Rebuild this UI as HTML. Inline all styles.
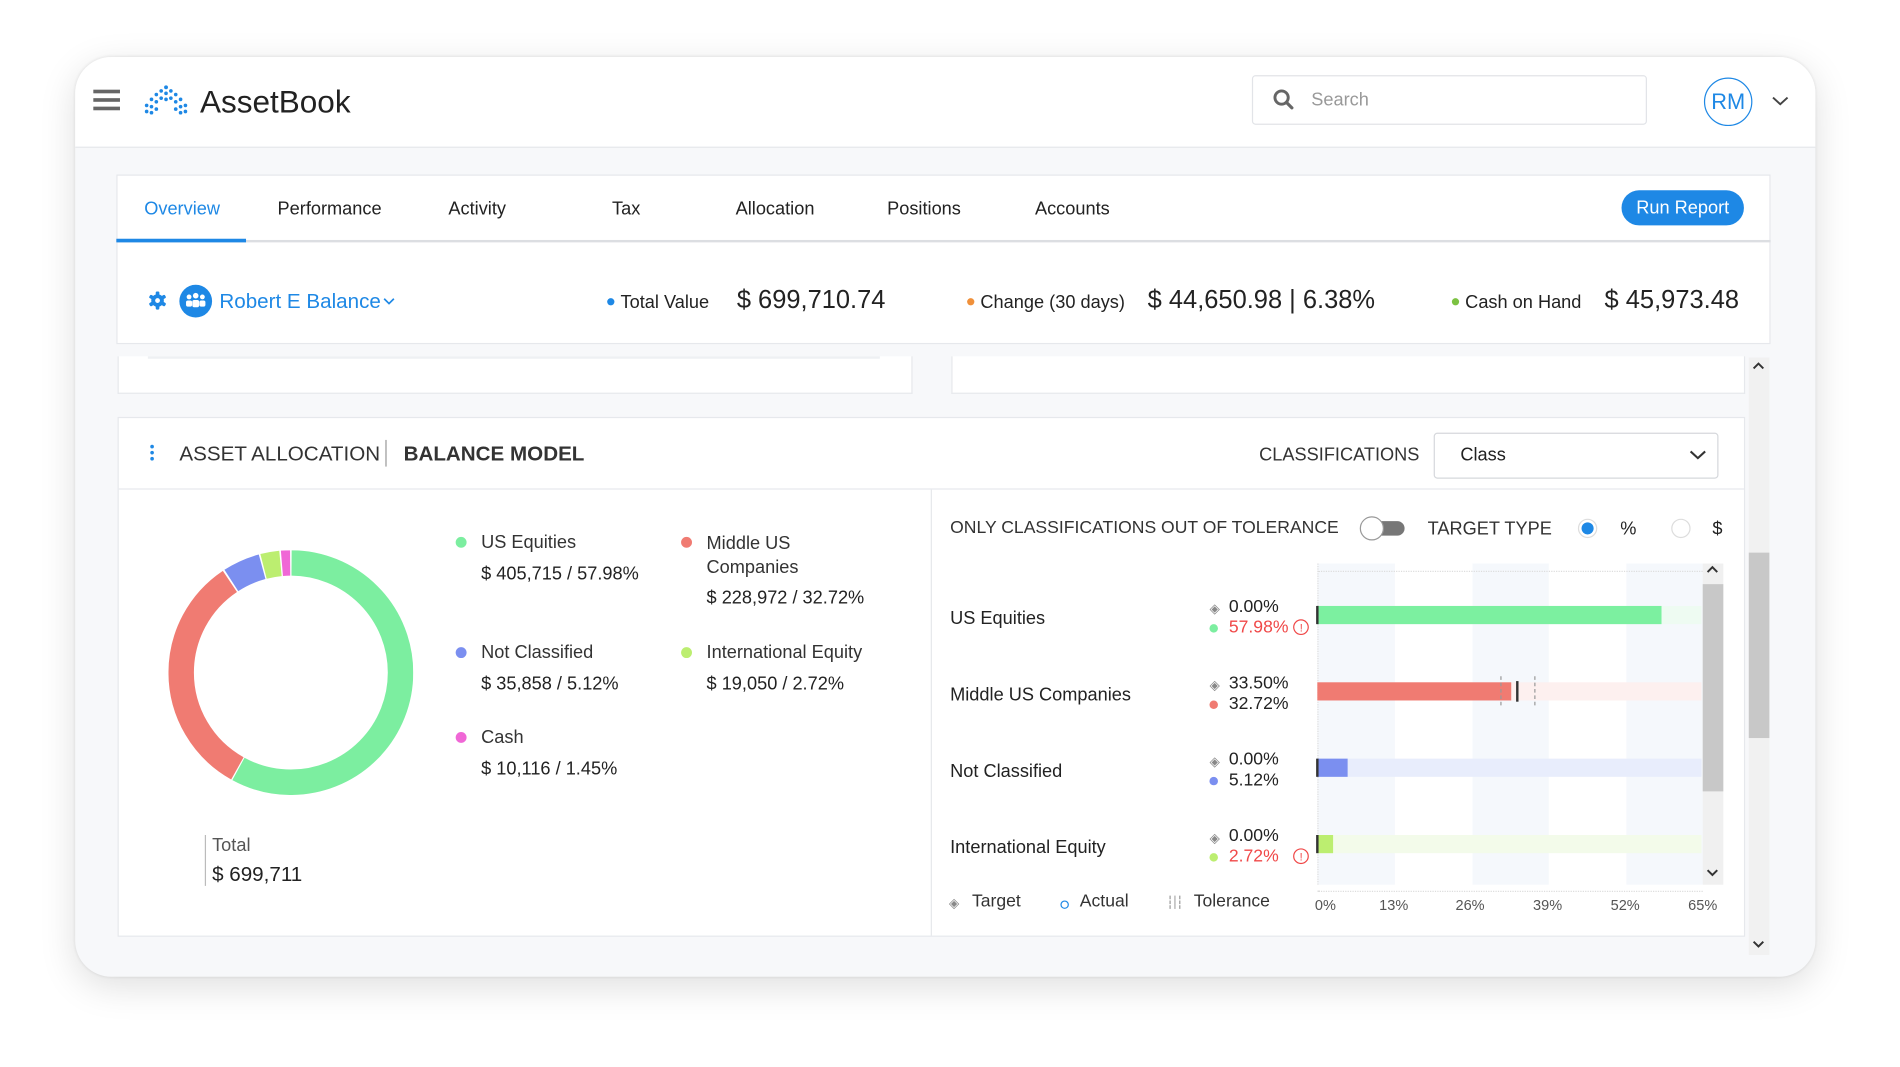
<!DOCTYPE html>
<html><head><meta charset="utf-8"><style>
*{box-sizing:border-box;margin:0;padding:0}
html,body{width:1900px;height:1067px;overflow:hidden;background:#fff}
#s{position:absolute;left:0;top:0;width:1560px;height:876px;transform:scale(1.2119);transform-origin:0 0;font-family:"Liberation Sans",sans-serif;color:#222}
.a{position:absolute;white-space:nowrap}
.card{position:absolute;left:62px;top:47px;width:1436px;height:759px;border-radius:30px;background:#f7f8fa;box-shadow:0 8px 30px rgba(0,0,0,.13),0 0 3px rgba(0,0,0,.1);overflow:hidden}
.hdr{position:absolute;left:0;top:0;width:1436px;height:75px;background:#fff;border-bottom:1px solid #e4e6ea}
.panel{position:absolute;background:#fff;border:1px solid #e6e8ec}
.dot{display:inline-block;width:7px;height:7px;border-radius:50%;margin-right:5px;vertical-align:middle;position:relative;top:-1px}
.t15{font-size:15px}
.ldot{position:absolute;width:9px;height:9px;border-radius:50%}
</style></head><body><div id="s">
<div class="card">
 <div class="hdr"></div>
</div>
<div class="a" style="left:77px;top:74px;width:22px;height:3px;background:#666;box-shadow:0 7px 0 #666,0 14px 0 #666"></div>
<svg class="a" style="left:118px;top:70px" width="38" height="26" viewBox="0 0 38 26">
<g fill="#1e88e5">
<circle cx="19" cy="2" r="1.6"/><circle cx="15" cy="5" r="1.5"/><circle cx="23" cy="5" r="1.5"/><circle cx="19" cy="7" r="1.5"/>
<circle cx="11" cy="8" r="1.5"/><circle cx="27" cy="8" r="1.5"/><circle cx="15" cy="11" r="1.5"/><circle cx="23" cy="11" r="1.5"/><circle cx="19" cy="12" r="1.5"/>
<circle cx="7" cy="12" r="1.5"/><circle cx="31" cy="12" r="1.5"/><circle cx="11" cy="14" r="1.5"/><circle cx="27" cy="14" r="1.5"/>
<circle cx="3" cy="17" r="1.5"/><circle cx="35" cy="17" r="1.5"/><circle cx="7" cy="18" r="1.5"/><circle cx="31" cy="18" r="1.5"/><circle cx="11" cy="20" r="1.5"/><circle cx="27" cy="20" r="1.5"/>
<circle cx="3" cy="22" r="1.5"/><circle cx="35" cy="22" r="1.5"/><circle cx="7" cy="23" r="1.5"/><circle cx="31" cy="23" r="1.5"/>
</g></svg>
<div class="a" style="left:165px;top:69px;font-size:26px;color:#222">AssetBook</div>
<div class="a" style="left:1033px;top:62px;width:326px;height:41px;border:1px solid #e2e4e8;border-radius:3px;background:#fff"></div>
<svg class="a" style="left:1050px;top:73px" width="18" height="18" viewBox="0 0 18 18"><circle cx="7.5" cy="7.5" r="5.5" fill="none" stroke="#666" stroke-width="2.4"/><path d="M11.5 11.5L16 16" stroke="#666" stroke-width="2.6" stroke-linecap="round"/></svg>
<div class="a" style="left:1082px;top:74px;font-size:15px;color:#999">Search</div>
<div class="a" style="left:1406px;top:64px;width:40px;height:40px;border:1.5px solid #1e88e5;border-radius:50%;color:#1e88e5;font-size:18px;text-align:center;line-height:38px">RM</div>
<svg class="a" style="left:1462px;top:79px" width="14" height="9"><path d="M1 1.5L7 7L13 1.5" fill="none" stroke="#444" stroke-width="1.6"/></svg>

<div class="panel" style="left:96px;top:144px;width:1365px;height:140px"></div>
<div class="a" style="left:96px;top:198px;width:1365px;height:2px;background:#dcdee2"></div>
<div class="a" style="left:96px;top:197px;width:107px;height:3px;background:#1e88e5"></div>
<div class="a t15" style="left:119px;top:164px;color:#1e88e5">Overview</div>
<div class="a t15" style="left:229px;top:164px">Performance</div>
<div class="a t15" style="left:370px;top:164px">Activity</div>
<div class="a t15" style="left:505px;top:164px">Tax</div>
<div class="a t15" style="left:607px;top:164px">Allocation</div>
<div class="a t15" style="left:732px;top:164px">Positions</div>
<div class="a t15" style="left:854px;top:164px">Accounts</div>
<div class="a" style="left:1338px;top:157px;width:101px;height:29px;border-radius:15px;background:#1e88e5;color:#fff;font-size:15px;text-align:center;line-height:29px">Run Report</div>

<svg class="a" style="left:122px;top:240px" width="16" height="16" viewBox="0 0 16 16"><g fill="#1e88e5"><circle cx="8" cy="8" r="5.2"/><rect x="6.5" y="0.5" width="3" height="15" rx="1"/><rect x="6.5" y="0.5" width="3" height="15" rx="1" transform="rotate(60 8 8)"/><rect x="6.5" y="0.5" width="3" height="15" rx="1" transform="rotate(120 8 8)"/></g><circle cx="8" cy="8" r="2" fill="#fff"/></svg>
<div class="a" style="left:148px;top:235px;width:27px;height:27px;border-radius:50%;background:#1e88e5"></div>
<svg class="a" style="left:151px;top:241px" width="21" height="14" viewBox="0 0 21 14"><g fill="#fff"><circle cx="5" cy="4" r="2"/><circle cx="10.5" cy="3" r="2.3"/><circle cx="16" cy="4" r="2"/><rect x="2.5" y="7" width="5" height="5" rx="1.5"/><rect x="7.7" y="6.5" width="5.6" height="6" rx="1.5"/><rect x="13.5" y="7" width="5" height="5" rx="1.5"/></g></svg>
<div class="a" style="left:181px;top:239px;font-size:17px;color:#1e88e5">Robert E Balance</div>
<svg class="a" style="left:316px;top:245px" width="10" height="7"><path d="M1 1.5L5 5.5L9 1.5" fill="none" stroke="#1e88e5" stroke-width="1.4"/></svg>

<div class="a t15" style="left:501px;top:241px"><span class="dot" style="background:#1e88e5;width:6px;height:6px"></span>Total Value</div>
<div class="a" style="left:608px;top:236px;font-size:21px">$ 699,710.74</div>
<div class="a t15" style="left:798px;top:241px"><span class="dot" style="background:#f0903a;width:6px;height:6px"></span>Change (30 days)</div>
<div class="a" style="left:947px;top:236px;font-size:21px">$ 44,650.98 | 6.38%</div>
<div class="a t15" style="left:1198px;top:241px"><span class="dot" style="background:#7cc242;width:6px;height:6px"></span>Cash on Hand</div>
<div class="a" style="left:1324px;top:236px;font-size:21px">$ 45,973.48</div>

<div class="panel" style="left:97px;top:294px;width:656px;height:31px;border-top:none"></div>
<div class="a" style="left:122px;top:294px;width:604px;height:2px;background:#eef0f3"></div>
<div class="panel" style="left:785px;top:294px;width:655px;height:31px;border-top:none"></div>
<div class="a" style="left:1443px;top:295px;width:17px;height:493px;background:#f1f1f1"></div>
<div class="a" style="left:1443px;top:456px;width:17px;height:153px;background:#c8c8c8"></div>
<svg class="a" style="left:1446px;top:298px" width="10" height="8"><path d="M1 6L5 2L9 6" fill="none" stroke="#333" stroke-width="1.6"/></svg>
<svg class="a" style="left:1446px;top:775px" width="10" height="8"><path d="M1 2L5 6L9 2" fill="none" stroke="#333" stroke-width="1.6"/></svg>

<div class="panel" style="left:97px;top:344px;width:1343px;height:429px"></div>
<div class="a" style="left:98px;top:403px;width:1341px;height:1px;background:#e6e8ec"></div>
<div class="a" style="left:768px;top:404px;width:1px;height:368px;background:#e6e8ec"></div>
<div class="a" style="left:124px;top:367px;width:3px;height:3px;border-radius:50%;background:#1e88e5;box-shadow:0 5px 0 #1e88e5,0 10px 0 #1e88e5"></div>
<div class="a" style="left:148px;top:365px;font-size:17px;color:#333">ASSET ALLOCATION</div>
<div class="a" style="left:318px;top:363px;width:1px;height:22px;background:#999"></div>
<div class="a" style="left:333px;top:365px;font-size:17px;font-weight:bold;color:#333">BALANCE MODEL</div>
<div class="a" style="left:1039px;top:367px;font-size:15px;color:#333">CLASSIFICATIONS</div>
<div class="a" style="left:1183px;top:357px;width:235px;height:38px;border:1px solid #d6d8dc;border-radius:3px;background:#fff"></div>
<div class="a" style="left:1205px;top:367px;font-size:15px">Class</div>
<svg class="a" style="left:1394px;top:371px" width="14" height="9"><path d="M1 1.5L7 7L13 1.5" fill="none" stroke="#333" stroke-width="1.7"/></svg>

<svg class="a" style="left:139px;top:454px" width="202" height="202" viewBox="0 0 202 202">
<g transform="rotate(-90 101 101)" fill="none" stroke-width="21">
<circle cx="101" cy="101" r="90.5" stroke="#7ceea0" stroke-dasharray="328.7 600" stroke-dashoffset="-0.6"/>
<circle cx="101" cy="101" r="90.5" stroke="#f07b72" stroke-dasharray="184.8 600" stroke-dashoffset="-330.3"/>
<circle cx="101" cy="101" r="90.5" stroke="#7b8ff0" stroke-dasharray="27.9 600" stroke-dashoffset="-516.5"/>
<circle cx="101" cy="101" r="90.5" stroke="#bcee70" stroke-dasharray="14.2 600" stroke-dashoffset="-545.6"/>
<circle cx="101" cy="101" r="90.5" stroke="#f067d6" stroke-dasharray="6.8 600" stroke-dashoffset="-561"/>
</g></svg>

<div class="ldot" style="left:376px;top:443px;background:#7ceea0"></div>
<div class="a t15" style="left:397px;top:439px;color:#333">US Equities</div>
<div class="a t15" style="left:397px;top:465px">$ 405,715 / 57.98%</div>
<div class="ldot" style="left:562px;top:443px;background:#f07b72"></div>
<div class="a t15" style="left:583px;top:439px;color:#333;line-height:20px;white-space:normal;width:120px">Middle US Companies</div>
<div class="a t15" style="left:583px;top:485px">$ 228,972 / 32.72%</div>
<div class="ldot" style="left:376px;top:534px;background:#7b8ff0"></div>
<div class="a t15" style="left:397px;top:530px;color:#333">Not Classified</div>
<div class="a t15" style="left:397px;top:556px">$ 35,858 / 5.12%</div>
<div class="ldot" style="left:562px;top:534px;background:#bcee70"></div>
<div class="a t15" style="left:583px;top:530px;color:#333">International Equity</div>
<div class="a t15" style="left:583px;top:556px">$ 19,050 / 2.72%</div>
<div class="ldot" style="left:376px;top:604px;background:#f067d6"></div>
<div class="a t15" style="left:397px;top:600px;color:#333">Cash</div>
<div class="a t15" style="left:397px;top:626px">$ 10,116 / 1.45%</div>
<div class="a" style="left:169px;top:689px;width:1px;height:42px;background:#bbb"></div>
<div class="a t15" style="left:175px;top:689px;color:#555">Total</div>
<div class="a" style="left:175px;top:712px;font-size:17px">$ 699,711</div>

<div class="a" style="left:784px;top:428px;font-size:14.5px;color:#333">ONLY CLASSIFICATIONS OUT OF TOLERANCE</div>
<div class="a" style="left:1127px;top:430px;width:32px;height:12px;border-radius:6px;background:#777"></div>
<div class="a" style="left:1122px;top:426px;width:20px;height:20px;border-radius:50%;background:#fff;border:1px solid #999"></div>
<div class="a" style="left:1178px;top:428px;font-size:15px;color:#333">TARGET TYPE</div>
<div class="a" style="left:1302px;top:428px;width:16px;height:16px;border-radius:50%;border:1px solid #ddd"></div>
<div class="a" style="left:1305px;top:431px;width:10px;height:10px;border-radius:50%;background:#1e88e5"></div>
<div class="a" style="left:1337px;top:428px;font-size:15px">%</div>
<div class="a" style="left:1379px;top:428px;width:16px;height:16px;border-radius:50%;border:1px solid #ddd"></div>
<div class="a" style="left:1413px;top:428px;font-size:15px">$</div>

<div class="a" style="left:1087px;top:465px;width:64px;height:265px;background:#f5f8fc"></div>
<div class="a" style="left:1215px;top:465px;width:63px;height:265px;background:#f5f8fc"></div>
<div class="a" style="left:1342px;top:465px;width:63px;height:265px;background:#f5f8fc"></div>
<div class="a" style="left:1087px;top:465px;width:0;height:265px;border-left:1px dotted #ddd"></div>
<div class="a" style="left:1087px;top:471px;width:318px;height:0;border-top:1px dotted #ddd"></div>
<div class="a" style="left:1087px;top:735px;width:318px;height:0;border-top:1px dotted #ddd"></div>
<div class="a" style="left:1405px;top:465px;width:17px;height:265px;background:#f0f0f0"></div>
<div class="a" style="left:1405px;top:482px;width:17px;height:171px;background:#c8c8c8"></div>
<svg class="a" style="left:1408px;top:466px" width="10" height="8"><path d="M1 6L5 2L9 6" fill="none" stroke="#333" stroke-width="1.6"/></svg>
<svg class="a" style="left:1408px;top:716px" width="10" height="8"><path d="M1 2L5 6L9 2" fill="none" stroke="#333" stroke-width="1.6"/></svg>

<div class="a" style="left:1087px;top:500px;width:317px;height:15px;background:#eefbf2"></div>
<div class="a" style="left:1087px;top:500px;width:284px;height:15px;background:#7cf0a0"></div>
<div class="a" style="left:1087px;top:563px;width:317px;height:15px;background:#fdf0ef"></div>
<div class="a" style="left:1087px;top:563px;width:160px;height:15px;background:#f07b72"></div>
<div class="a" style="left:1087px;top:626px;width:317px;height:15px;background:#e8edfc"></div>
<div class="a" style="left:1087px;top:626px;width:25px;height:15px;background:#7b8ff0"></div>
<div class="a" style="left:1087px;top:689px;width:317px;height:15px;background:#f3fbea"></div>
<div class="a" style="left:1087px;top:689px;width:13px;height:15px;background:#bcee70"></div>
<div class="a" style="left:1086px;top:500px;width:2px;height:15px;background:#333"></div>
<div class="a" style="left:1086px;top:626px;width:2px;height:15px;background:#333"></div>
<div class="a" style="left:1086px;top:689px;width:2px;height:15px;background:#333"></div>
<div class="a" style="left:1251px;top:562px;width:2px;height:17px;background:#333"></div>
<div class="a" style="left:1238px;top:558px;width:0;height:24px;border-left:1px dashed #999"></div>
<div class="a" style="left:1266px;top:558px;width:0;height:24px;border-left:1px dashed #999"></div>

<div class="a t15" style="left:784px;top:502px">US Equities</div>
<div class="a t15" style="left:784px;top:565px">Middle US Companies</div>
<div class="a t15" style="left:784px;top:628px">Not Classified</div>
<div class="a t15" style="left:784px;top:691px">International Equity</div>

<div class="a" style="left:998px;top:496px;font-size:11px;color:#888">◈</div>
<div class="a" style="left:1014px;top:493px;font-size:14.5px">0.00%</div>
<div class="ldot" style="left:998px;top:515px;width:7px;height:7px;background:#7ceea0"></div>
<div class="a" style="left:1014px;top:510px;font-size:14.5px;color:#f04848">57.98% <span style="display:inline-block;width:13px;height:13px;border:1px solid #f04848;border-radius:50%;font-size:9px;text-align:center;line-height:12px;vertical-align:1px">!</span></div>

<div class="a" style="left:998px;top:559px;font-size:11px;color:#888">◈</div>
<div class="a" style="left:1014px;top:556px;font-size:14.5px">33.50%</div>
<div class="ldot" style="left:998px;top:578px;width:7px;height:7px;background:#f07b72"></div>
<div class="a" style="left:1014px;top:573px;font-size:14.5px">32.72%</div>

<div class="a" style="left:998px;top:622px;font-size:11px;color:#888">◈</div>
<div class="a" style="left:1014px;top:619px;font-size:14.5px">0.00%</div>
<div class="ldot" style="left:998px;top:641px;width:7px;height:7px;background:#7b8ff0"></div>
<div class="a" style="left:1014px;top:636px;font-size:14.5px">5.12%</div>

<div class="a" style="left:998px;top:685px;font-size:11px;color:#888">◈</div>
<div class="a" style="left:1014px;top:682px;font-size:14.5px">0.00%</div>
<div class="ldot" style="left:998px;top:704px;width:7px;height:7px;background:#bcee70"></div>
<div class="a" style="left:1014px;top:699px;font-size:14.5px;color:#f04848">2.72% <span style="display:inline-block;width:13px;height:13px;border:1px solid #f04848;border-radius:50%;font-size:9px;text-align:center;line-height:12px;vertical-align:1px;margin-left:8px">!</span></div>

<div class="a" style="left:783px;top:739px;font-size:11px;color:#888">◈</div>
<div class="a" style="left:802px;top:736px;font-size:14.5px;color:#333">Target</div>
<div class="a" style="left:875px;top:743px;width:7px;height:7px;border:1.5px solid #1e88e5;border-radius:50%"></div>
<div class="a" style="left:891px;top:736px;font-size:14.5px;color:#333">Actual</div>
<div class="a" style="left:965px;top:739px;width:0;height:11px;border-left:1px dashed #999"></div>
<div class="a" style="left:969px;top:739px;width:1px;height:11px;background:#aaa"></div>
<div class="a" style="left:973px;top:739px;width:0;height:11px;border-left:1px dashed #999"></div>
<div class="a" style="left:985px;top:736px;font-size:14.5px;color:#333">Tolerance</div>

<div class="a" style="left:1085px;top:740px;font-size:12px;color:#555">0%</div>
<div class="a" style="left:1138px;top:740px;font-size:12px;color:#555">13%</div>
<div class="a" style="left:1201px;top:740px;font-size:12px;color:#555">26%</div>
<div class="a" style="left:1265px;top:740px;font-size:12px;color:#555">39%</div>
<div class="a" style="left:1329px;top:740px;font-size:12px;color:#555">52%</div>
<div class="a" style="left:1393px;top:740px;font-size:12px;color:#555">65%</div>
</div></body></html>
